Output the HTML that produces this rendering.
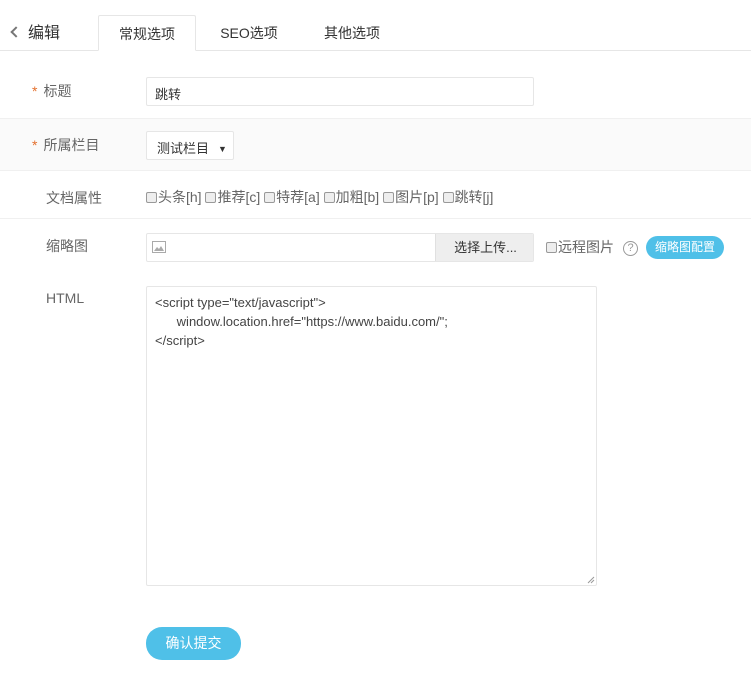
<!DOCTYPE html>
<html><head><meta charset="utf-8"><style>
*{box-sizing:border-box;margin:0;padding:0}
body{width:751px;height:687px;background:#fff;font-family:"Liberation Sans","Noto Sans CJK SC",sans-serif;font-size:14px;color:#666;position:relative;overflow:hidden}
.abs{position:absolute;white-space:nowrap}
.tabbar{left:0;top:50px;width:751px;height:1px;background:#e6e6e6}
.tab{top:15px;height:36px;line-height:36px;font-size:14px;color:#333;text-align:center}
.active{left:98px;width:98px;border:1px solid #e6e6e6;border-bottom:1px solid #fff;background:#fff;border-radius:2px 2px 0 0}
.row{left:0;width:751px;border-bottom:1px solid #f0f0f0}
.lbl{font-size:14px;color:#666}
.star{color:#e4702e;margin-right:6px}
.input{border:1px solid #e6e6e6;border-radius:2px;background:#fff}
.cb{display:inline-block;width:11px;height:11px;border:1px solid #999;border-radius:2px;background:#eee;vertical-align:-1px;margin-right:1px}
.btn{background:#4fc0e8;color:#fff;border-radius:16px;text-align:center}
</style></head><body>
<div class="abs" style="left:12px;top:19px;font-size:16px;color:#333"><span style="display:inline-block;width:8px;height:8px;border-left:2px solid #777;border-bottom:2px solid #777;transform:rotate(45deg);margin-right:8px;vertical-align:2px"></span>编辑</div>
<div class="abs tabbar"></div>
<div class="abs tab active">常规选项</div>
<div class="abs tab" style="left:200px;width:98px">SEO选项</div>
<div class="abs tab" style="left:303px;width:98px">其他选项</div>

<div class="abs row" style="top:118px;height:53px;background:#fafafa;border-top:1px solid #f0f0f0"></div>
<div class="abs row" style="top:171px;height:48px"></div>

<div class="abs lbl" style="left:32px;top:81px"><span class="star">*</span>标题</div>
<div class="abs input" style="left:146px;top:77px;width:388px;height:29px;padding:6px 8px;font-size:13px;color:#333">跳转</div>

<div class="abs lbl" style="left:32px;top:135px"><span class="star">*</span>所属栏目</div>
<div class="abs input" style="left:146px;top:131px;width:88px;height:29px;padding:6px 0 0 10px;font-size:13px;color:#333">测试栏目<span style="font-size:9px;margin-left:9px;vertical-align:1px">▼</span></div>

<div class="abs lbl" style="left:46px;top:188px">文档属性</div>
<div class="abs" style="left:146px;top:187px;font-size:14px;color:#666"><span class="cb"></span>头条[h] <span class="cb"></span>推荐[c] <span class="cb"></span>特荐[a] <span class="cb"></span>加粗[b] <span class="cb"></span>图片[p] <span class="cb"></span>跳转[j]</div>

<div class="abs lbl" style="left:46px;top:236px">缩略图</div>
<div class="abs input" style="left:146px;top:233px;width:388px;height:29px;overflow:hidden">
<svg class="abs" style="left:5px;top:7px" width="14" height="12" viewBox="0 0 14 12"><rect x="0.5" y="0.5" width="13" height="11" fill="#fff" stroke="#aaa"/><path d="M2 10 L5 6 L7 8 L9 5 L12 10Z" fill="#aaa"/></svg>
<div class="abs" style="left:288px;top:0;width:100px;height:29px;background:#eee;border-left:1px solid #e0e0e0;line-height:27px;text-align:center;font-size:13px;color:#333">选择上传...</div>
</div>
<div class="abs" style="left:546px;top:237px;font-size:14px"><span class="cb"></span>远程图片</div>
<div class="abs" style="left:623px;top:241px;width:15px;height:15px;border:1px solid #999;border-radius:50%;font-size:11px;line-height:13px;text-align:center;color:#999">?</div>
<div class="abs btn" style="left:646px;top:236px;width:78px;height:23px;line-height:23px;font-size:12px">缩略图配置</div>

<div class="abs lbl" style="left:46px;top:290px">HTML</div>
<div class="abs input" style="left:146px;top:286px;width:451px;height:300px;padding:6px 8px;font-size:13px;line-height:19px;color:#444;white-space:pre">&lt;script type="text/javascript"&gt;
      window.location.href="https://www.baidu.com/";
&lt;/script&gt;</div>
<svg class="abs" style="left:587px;top:576px" width="8" height="8"><path d="M1 7 L7 1 M4 7 L7 4" stroke="#999"/></svg>

<div class="abs btn" style="left:146px;top:627px;width:95px;height:33px;line-height:33px;font-size:14px">确认提交</div>
</body></html>
